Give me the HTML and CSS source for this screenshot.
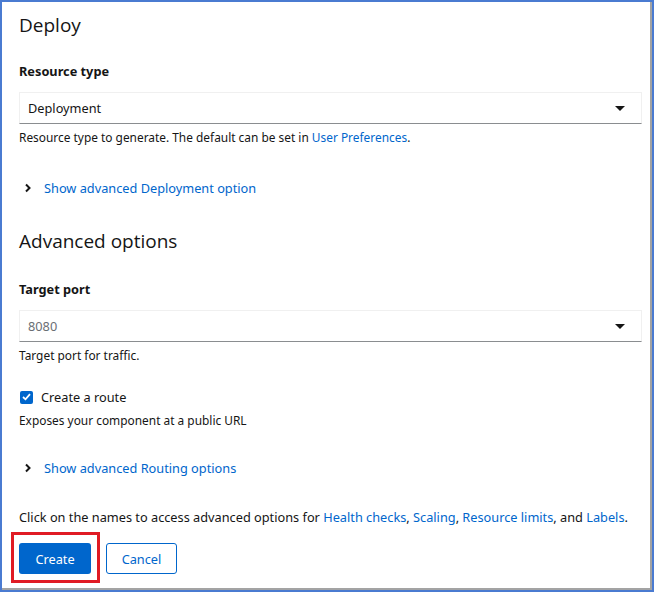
FILE: index.html
```html
<!DOCTYPE html>
<html>
<head>
<meta charset="utf-8">
<link rel="stylesheet" href="styles.css">
</head>
<body>
<div class="frame">
  <div class="content">
    <h2 class="title">Deploy</h2>
    <div class="group">
      <label class="label">Resource type</label>
      <div class="select"><span>Deployment</span><span class="caret"></span></div>
      <div class="helper">Resource type to generate. The default can be set in <a class="link">User Preferences</a>.</div>
    </div>
    <div class="expand"><span class="chev"><svg width="8" height="10" viewBox="0 0 8 10"><path d="M2 1.5 L5.5 5 L2 8.5" fill="none" stroke="#151515" stroke-width="2"/></svg></span><a class="link">Show advanced Deployment option</a></div>

    <h2 class="title title2">Advanced options</h2>
    <div class="group group2">
      <label class="label">Target port</label>
      <div class="select"><span class="placeholder">8080</span><span class="caret"></span></div>
      <div class="helper">Target port for traffic.</div>
    </div>
    <div class="check">
      <span class="box"><svg width="9" height="8" viewBox="0 0 9 8"><path d="M1 4 L3.5 6.3 L8 1.2" fill="none" stroke="#fff" stroke-width="1.8"/></svg></span>
      <span>Create a route</span>
    </div>
    <div class="helper helper2">Exposes your component at a public URL</div>
    <div class="expand expand2"><span class="chev"><svg width="8" height="10" viewBox="0 0 8 10"><path d="M2 1.5 L5.5 5 L2 8.5" fill="none" stroke="#151515" stroke-width="2"/></svg></span><a class="link">Show advanced Routing options</a></div>

    <p class="note">Click on the names to access advanced options for <a class="link">Health checks</a>, <a class="link">Scaling</a>, <a class="link">Resource limits</a>, and <a class="link">Labels</a>.</p>

    <div class="actions">
      <div class="highlight"><button class="btn primary">Create</button></div>
      <button class="btn secondary">Cancel</button>
    </div>
  </div>
</div>
</body>
</html>
```
FILE: styles.css
```css
* { box-sizing: border-box; }
html, body { margin: 0; padding: 0; background: #fff; }
body { font-family: "Noto Sans", "Open Sans", sans-serif; color: #151515; font-size: 12.75px; }
.frame {
  width: 654px;
  height: 592px;
  border: 2px solid #4a7bd1;
  box-shadow: inset -2px -2px 0 #a3a3a3;
  overflow: hidden;
}
.content { padding: 9px 10px 0 17px; }
.title {
  margin: 0;
  font-family: "Open Sans", sans-serif;
  font-weight: 500;
  font-size: 19px;
  line-height: 28px;
  color: #151515;
}
.title2 { margin-top: 30px; }
.group { margin-top: 23px; }
.group2 { margin-top: 25px; }
.label { display: block; font-weight: 700; font-size: 12.75px; line-height: 18px; }
.select {
  margin-top: 12px;
  height: 32px;
  border: 1px solid #f0f0f0;
  border-bottom: 1px solid #8a8d90;
  display: flex;
  align-items: center;
  justify-content: space-between;
  padding: 0 16px 0 8px;
  font-size: 12.75px;
}
.placeholder { color: #6a6e73; }
.caret {
  width: 0; height: 0;
  border-left: 5px solid transparent;
  border-right: 5px solid transparent;
  border-top: 5px solid #151515;
}
.helper { margin-top: 4px; font-size: 11.9px; line-height: 18px; }
.link { color: #0066cc; text-decoration: none; }
.expand { margin-top: 33px; display: flex; align-items: center; font-size: 12.75px; line-height: 18px; }
.chev { width: 25px; padding-left: 5px; display: flex; align-items: center; }
.check { margin-top: 24px; display: flex; align-items: center; gap: 8px; font-size: 12.75px; line-height: 18px; }
.box {
  width: 13px; height: 13px; margin-left: 1px;
  background: #0066cc; border-radius: 2px;
  display: flex; align-items: center; justify-content: center;
}
.helper2 { margin-top: 5px; }
.expand2 { margin-top: 30px; }
.note { margin: 31px 0 0; font-size: 12.75px; line-height: 18px; }
.actions { margin-top: 17px; display: flex; align-items: flex-start; gap: 6px; }
.highlight { border: 3px solid #e01b24; padding: 8px 6px 6px 5px; margin-left: -8px; margin-top: -11px; }
.btn {
  width: 72px; height: 31px;
  font-family: inherit; font-size: 12.75px;
  border-radius: 3px;
  display: flex; align-items: center; justify-content: center;
}
.primary { background: #0066cc; color: #fff; border: none; }
.secondary { background: #fff; color: #0066cc; border: 1px solid #0066cc; width: 71px; }
```
